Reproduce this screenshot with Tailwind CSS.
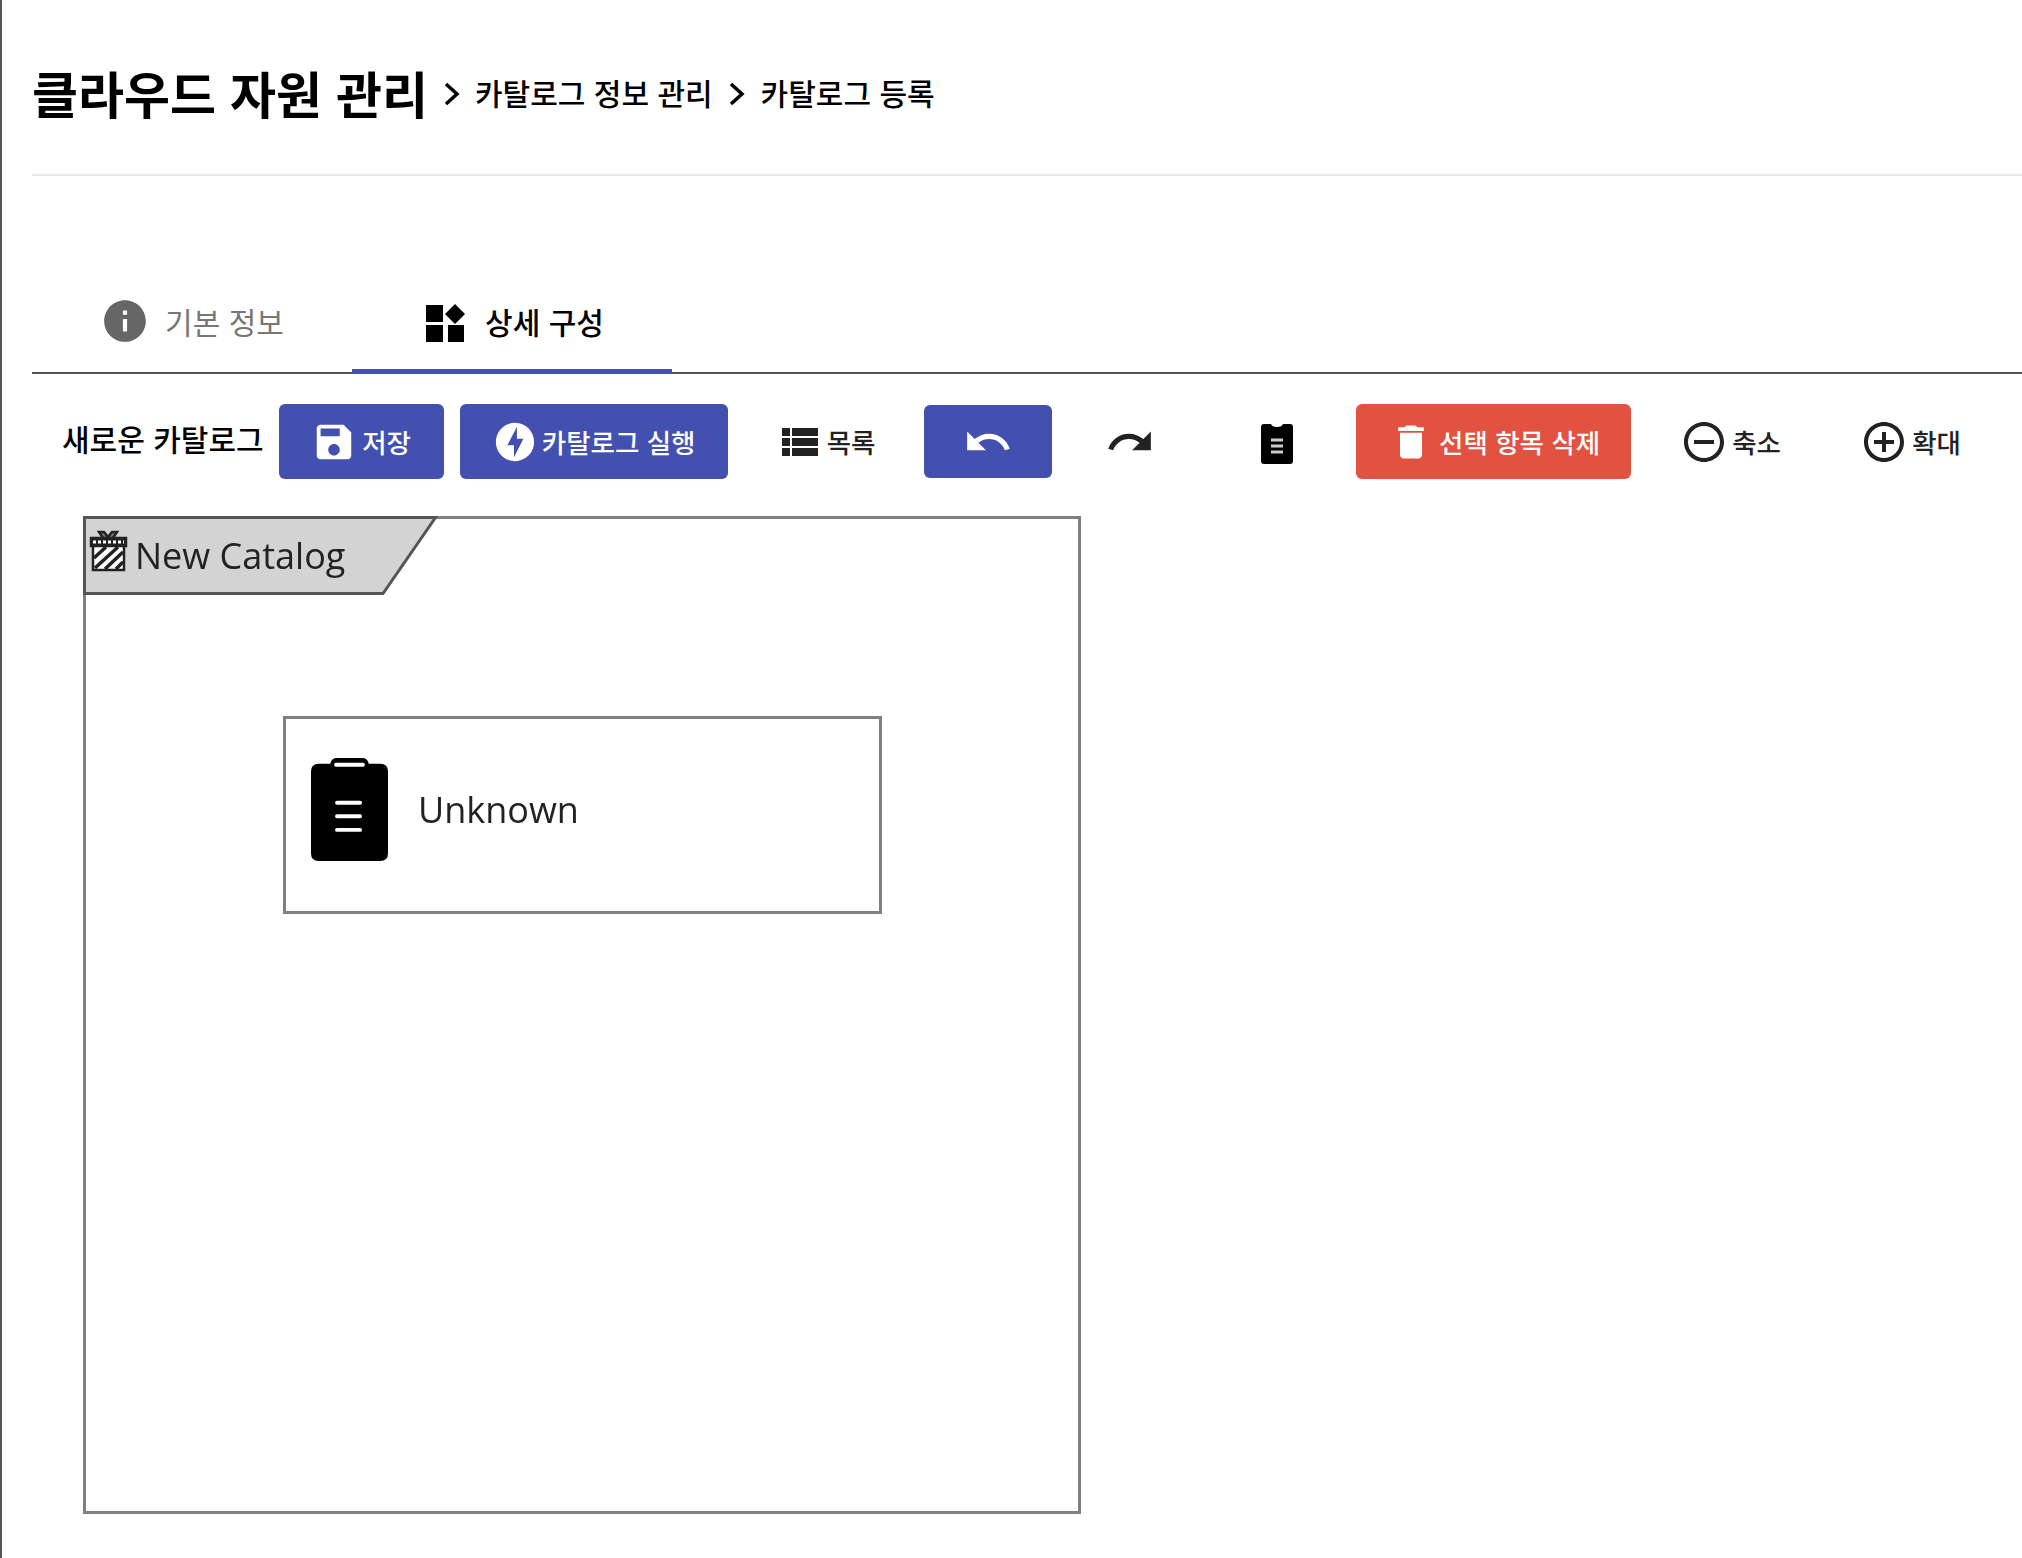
<!DOCTYPE html>
<html lang="ko">
<head>
  <meta charset="UTF-8" />
  <meta name="viewport" content="width=device-width, initial-scale=1" />
  <title>카탈로그 등록</title>
  <script src="https://cdn.jsdelivr.net/npm/@tailwindcss/browser@4"></script>
</head>
<body class="bg-white">
  <div class="h-[1558px] overflow-hidden border-l-2 border-[#555] pl-[30px] font-['Noto_Sans_CJK_KR',sans-serif] text-black">

    <!-- 헤더 -->
    <header class="flex h-[176px] items-center border-b-2 border-[#e8e8e8] pt-[10px]">
      <h1 class="text-[50px] leading-none font-bold">클라우드 자원 관리</h1>
      <svg class="ml-[13px] mr-[12px] mt-1 h-[30px] w-[22px]" viewBox="0 0 22 30" fill="none" stroke="black" stroke-width="3.5"><path d="M5 5l11 10L5 25" /></svg>
      <span class="text-[30px] leading-none font-medium">카탈로그 정보 관리</span>
      <svg class="mx-[13px] mt-1 h-[30px] w-[22px]" viewBox="0 0 22 30" fill="none" stroke="black" stroke-width="3.5"><path d="M5 5l11 10L5 25" /></svg>
      <span class="text-[30px] leading-none font-medium">카탈로그 등록</span>
    </header>

    <!-- 탭 -->
    <nav class="mt-[78px] flex h-[120px] items-stretch border-b-2 border-[#555]">
      <div class="flex w-[320px] items-center justify-center gap-[15px] pt-[16px] text-[#777]">
        <svg class="size-[50px]" viewBox="0 0 24 24" fill="#666"><path d="M12 2C6.48 2 2 6.48 2 12s4.48 10 10 10 10-4.48 10-10S17.52 2 12 2zm1 15h-2v-6h2v6zm0-8h-2V7h2v2z" /></svg>
        <span class="text-[30px] leading-none">기본 정보</span>
      </div>
      <div class="-mb-[2px] flex w-[320px] items-center justify-center gap-[20px] border-b-[5px] border-[#4350af] pt-[19px] pl-[5px]">
        <svg class="mt-[3px] size-[40px]" viewBox="0 0 40 40" fill="black"><path d="M1 2h17v17H1zM1 22h17v17H1zM23 22h16v17H23zM30 1l10 10-10 10-10-10z" /></svg>
        <span class="text-[30px] leading-none font-medium">상세 구성</span>
      </div>
    </nav>

    <!-- 툴바 -->
    <div class="mt-[29px] flex h-[76px] items-center text-[26.5px] leading-none">
      <span class="ml-[30px] mr-[15px] -mt-[6px] text-[30px] leading-none font-medium">새로운 카탈로그</span>
      <button class="flex h-[75px] w-[165px] items-center justify-center gap-[5px] rounded-[6px] bg-[#4350af] pt-[2px] font-medium text-white">
        <svg class="size-[46px]" viewBox="0 0 24 24" fill="white"><path d="M17 3H5c-1.11 0-2 .9-2 2v14c0 1.1.89 2 2 2h14c1.1 0 2-.9 2-2V7l-4-4zm-5 16c-1.66 0-3-1.34-3-3s1.34-3 3-3 3 1.34 3 3-1.34 3-3 3zm3-10H5V5h10v4z" /></svg>
        저장
      </button>
      <button class="ml-[16px] flex h-[75px] w-[268px] items-center justify-center gap-[4px] rounded-[6px] bg-[#4350af] pt-[2px] font-medium text-white">
        <svg class="size-[46px]" viewBox="0 0 24 24" fill="white"><path d="M12 2.02c-5.51 0-9.98 4.47-9.98 9.98s4.47 9.98 9.98 9.98 9.98-4.47 9.98-9.98S17.51 2.02 12 2.02zM11.48 20v-6.26H8L13 4v6.26h3.35L11.48 20z" /></svg>
        카탈로그 실행
      </button>
      <button class="flex h-[75px] w-[196px] items-center justify-center gap-[9px] pt-[2px] pl-[6px] font-medium text-[#222]">
        <svg class="h-[28px] w-[36px]" viewBox="3 5 18 14" preserveAspectRatio="none" fill="#222"><path d="M3 14h4v-4H3v4zm0 5h4v-4H3v4zM3 9h4V5H3v4zm5 5h13v-4H8v4zm0 5h13v-4H8v4zM8 5v4h13V5H8z" /></svg>
        목록
      </button>
      <button class="flex h-[73px] w-[128px] items-center justify-center rounded-[6px] bg-[#4350af] pt-[2px]">
        <svg class="size-[50px]" viewBox="0 0 24 24" fill="white"><path d="M12.5 8c-2.65 0-5.05.99-6.9 2.6L2 7v9h9l-3.62-3.62c1.39-1.16 3.16-1.88 5.12-1.88 3.54 0 6.55 2.31 7.6 5.5l2.37-.78C21.08 11.03 17.15 8 12.5 8z" /></svg>
      </button>
      <button class="flex h-[75px] w-[156px] items-center justify-center pt-[2px]">
        <svg class="size-[50px]" viewBox="0 0 24 24" fill="#222"><path d="M18.4 10.6C16.55 8.99 14.15 8 11.5 8c-4.65 0-8.58 3.03-9.96 7.22L3.9 16c1.05-3.19 4.05-5.5 7.6-5.5 1.95 0 3.73.72 5.12 1.88L13 16h9V7l-3.6 3.6z" /></svg>
      </button>
      <button class="mr-[10px] flex h-[75px] w-[138px] items-center justify-center pt-[3px]">
        <svg class="h-[42px] w-[32px] blur-[0.6px]" viewBox="0 0 32 42" fill="black"><path d="M3 2h7q1 3 6 3t6-3h7q3 0 3 3v34q0 3-3 3H3q-3 0-3-3V5q0-3 3-3z" /><path d="M10 18h12M10 24h12M10 30h12" stroke="#ccc" stroke-width="3" /></svg>
      </button>
      <button class="flex h-[75px] w-[275px] items-center justify-center gap-[6px] rounded-[6px] bg-[#e25241] pt-[2px] pl-[3px] font-medium text-white">
        <svg class="h-[46px] w-[44px]" viewBox="0 0 24 24" fill="white"><path d="M6 19c0 1.1.9 2 2 2h8c1.1 0 2-.9 2-2V7H6v12zM19 4h-3.5l-1-1h-5l-1 1H5v2h14V4z" /></svg>
        선택 항목 삭제
      </button>
      <button class="flex h-[75px] w-[200px] items-center justify-center gap-[4px] pt-[2px] font-medium text-[#222]">
        <svg class="size-[48px]" viewBox="0 0 24 24" fill="#222"><path d="M7 11v2h10v-2H7zm5-9C6.48 2 2 6.48 2 12s4.48 10 10 10 10-4.48 10-10S17.52 2 12 2zm0 18c-4.41 0-8-3.59-8-8s3.59-8 8-8 8 3.59 8 8-3.59 8-8 8z" /></svg>
        축소
      </button>
      <button class="flex h-[75px] w-[160px] items-center justify-center gap-[4px] pt-[2px] font-medium text-[#222]">
        <svg class="size-[48px]" viewBox="0 0 24 24" fill="#222"><path d="M13 7h-2v4H7v2h4v4h2v-4h4v-2h-4V7zm-1-5C6.48 2 2 6.48 2 12s4.48 10 10 10 10-4.48 10-10S17.52 2 12 2zm0 18c-4.41 0-8-3.59-8-8s3.59-8 8-8 8 3.59 8 8-3.59 8-8 8z" /></svg>
        확대
      </button>
    </div>

    <!-- 다이어그램 캔버스 -->
    <div class="relative mt-[37px] ml-[51px] h-[998px] w-[998px] border-[3px] border-[#808080] font-['Open_Sans',sans-serif] blur-[0.6px]">
      <svg class="absolute -top-[3px] -left-[3px] h-[80px] w-[356px]" viewBox="0 0 356 80">
        <path d="M1.5 1.5H352.5L300 77.5H1.5z" fill="#d3d3d3" stroke="#555" stroke-width="3" />
        <g transform="translate(7 14)" stroke="#222" stroke-width="2.5" fill="none">
          <path d="M13 8L9 2h5l4 5 4-5h5l-4 6" fill="#777" />
          <rect x="1" y="8" width="35" height="8" fill="#222" />
          <path d="M3 12h31" stroke="white" stroke-width="3" stroke-dasharray="3 2" />
          <rect x="3" y="16" width="31" height="24" fill="white" />
          <path d="M4 28L16 17M5 38L28 17M15 39L33 22M26 39l7-7" stroke-width="3.5" />
        </g>
      </svg>
      <span class="absolute top-[11px] left-[49px] text-[36px] leading-[52px] text-[#222]">New Catalog</span>
      <div class="absolute top-[197px] left-[197px] flex h-[198px] w-[599px] items-center border-[3px] border-[#808080]">
        <svg class="ml-[25px] mb-[11px] h-[103px] w-[77px]" viewBox="0 0 80 106" preserveAspectRatio="none" fill="black">
          <path d="M8 6h12q1-6 7-6h26q6 0 7 6h12q8 0 8 8v84q0 8-8 8H8q-8 0-8-8V14q0-8 8-8z" />
          <path d="M26 7h28M27 46h24M27 60h24M27 74h24" stroke="white" stroke-width="4" stroke-linecap="round" />
        </svg>
        <span class="ml-[30px] mb-[10px] text-[36px] leading-none text-[#222]">Unknown</span>
      </div>
    </div>
  </div>
</body>
</html>
